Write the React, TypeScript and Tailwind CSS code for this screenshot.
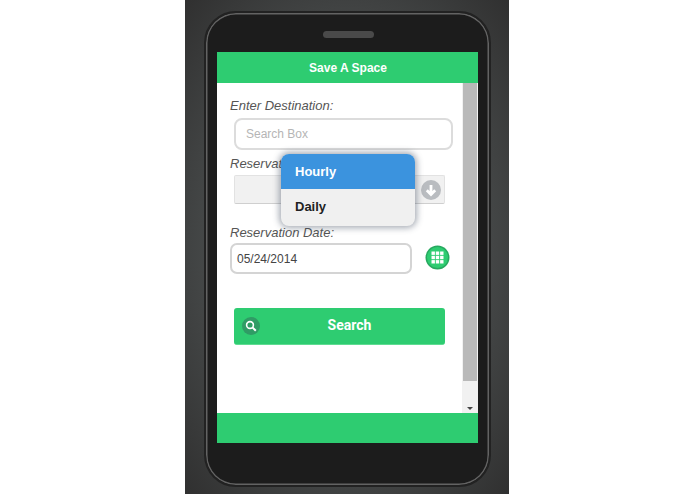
export default function App() {
  return (
    <div className="w-[695px] h-[494px] bg-white flex justify-center overflow-hidden font-['Liberation_Sans',Arial,sans-serif]">
      <div className="w-[324px] h-[494px] mr-[1px] pt-[11px] pl-[19px] bg-[radial-gradient(ellipse_at_center,#5a5d5d_0%,#484b4b_55%,#303030_100%)]">
        <div className="w-[287px] h-[476px] rounded-[32px] bg-[#1c1c1c] border-[2px] border-[#222] shadow-[inset_0_0_0_1.5px_#636363] pt-[39px] pl-[11px] relative">
          <div className="absolute left-[117px] top-[18px] w-[51px] h-[7px] rounded-full bg-[#4a4a4a]" />
          <div className="w-[261px] h-[391px] flex flex-col">
            <div className="h-[31px] shrink-0 bg-[#2ecc71] flex items-center justify-center pl-[1px] text-white font-bold text-[12px]">Save A Space</div>
            <div className="h-[330px] shrink-0 bg-white flex relative">
              <div className="w-[245px] shrink-0 pl-[13px] pt-[15px]">
                <div className="text-[13px] leading-[16px] italic text-[#555]">Enter Destination:</div>
                <div className="ml-[4px] mt-[4px] w-[219px] h-[32px] rounded-[8px] border-2 border-[#dcdcdc] flex items-center pl-[10px] text-[12px] text-[#b5b5b5]">Search Box</div>
                <div className="mt-[6px] text-[13px] leading-[16px] italic text-[#555]">Reservation Type:</div>
                <div className="ml-[4px] mt-[3px] w-[211px] h-[29px] rounded-[2px] border border-[#e2e2e2] border-b-[#cfcfcf] bg-[#f1f1f1] flex items-center justify-end pr-[3px]">
                  <div className="w-[20px] h-[20px] rounded-full bg-[#b9bcc0] flex items-center justify-center">
                    <svg width="14" height="14" viewBox="0 0 14 14"><path d="M7 2v9M2.8 7.2L7 11.4l4.2-4.2" fill="none" stroke="#fff" strokeWidth="2.8" /></svg>
                  </div>
                </div>
                <div className="mt-[21px] text-[13px] leading-[16px] italic text-[#555]">Reservation Date:</div>
                <div className="flex items-center mt-[2px]">
                  <div className="w-[182px] h-[31px] rounded-[7px] border-2 border-[#d4d4d4] flex items-center pl-[5px] text-[12px] text-[#444]">05/24/2014</div>
                  <div className="ml-[15px] mb-[3px] w-[21px] h-[21px] rounded-full bg-[#2ecc71] shadow-[0_0_0_1.5px_#27a85f] flex items-center justify-center">
                    <svg width="13" height="13" viewBox="0 0 13 13" fill="#fff">
                      <rect x="0.5" y="0.5" width="3.4" height="3.4" /><rect x="4.8" y="0.5" width="3.4" height="3.4" /><rect x="9.1" y="0.5" width="3.4" height="3.4" />
                      <rect x="0.5" y="4.8" width="3.4" height="3.4" /><rect x="4.8" y="4.8" width="3.4" height="3.4" /><rect x="9.1" y="4.8" width="3.4" height="3.4" />
                      <rect x="0.5" y="9.1" width="3.4" height="3.4" /><rect x="4.8" y="9.1" width="3.4" height="3.4" /><rect x="9.1" y="9.1" width="3.4" height="3.4" />
                    </svg>
                  </div>
                </div>
                <div className="ml-[4px] mt-[34px] w-[211px] h-[37px] rounded-[3px] bg-[#2ecc71] border-b border-[#5fdc92] relative flex items-center justify-center pl-[20px] text-white font-bold text-[14px] font-['Roboto',sans-serif]">
                  <span className="-mt-[1px]">Search</span>
                  <div className="absolute left-[8px] top-[9px] w-[18px] h-[18px] rounded-full bg-[#2f9c65] flex items-center justify-center">
                    <svg width="12" height="12" viewBox="0 0 12 12" fill="none" stroke="#fff" strokeWidth="1.6"><circle cx="5" cy="5" r="3.4" /><path d="M7.4 7.4L10.8 10.8" strokeWidth="2" /></svg>
                  </div>
                </div>
              </div>
              <div className="w-[16px] shrink-0 bg-[#f1f1f1] flex flex-col items-center relative">
                <div className="w-[14px] h-[298px] bg-[#b9b9b9]" />
                <div className="absolute bottom-[3px] left-[5px] w-0 h-0 border-x-[3px] border-x-transparent border-t-[3px] border-t-[#444]" />
              </div>
              <div className="absolute left-[64px] top-[71px] w-[134px] h-[72px] rounded-[8px] bg-[#f0f0f0] shadow-[0_0_6px_2px_rgba(60,70,90,0.45)] overflow-hidden text-[13px] font-bold">
                <div className="h-[35px] bg-[#3b93de] text-white flex items-center pl-[14px] -mt-[0px]">Hourly</div>
                <div className="h-[37px] text-[#222] flex items-center pl-[14px] pb-[2px]">Daily</div>
              </div>
            </div>
            <div className="h-[30px] shrink-0 bg-[#2ecc71]" />
          </div>
        </div>
      </div>
    </div>
  );
}
